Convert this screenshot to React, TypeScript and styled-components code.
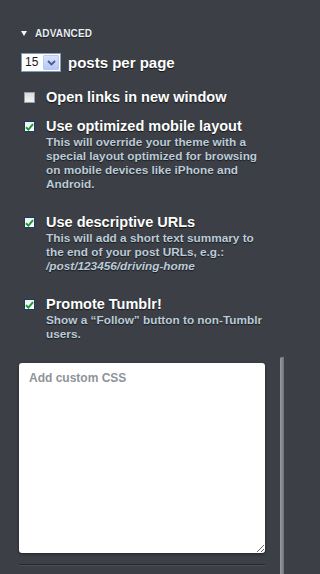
import React from 'react';
import styled, { createGlobalStyle } from 'styled-components';

type OptionProps = {
  title: string;
  checked: boolean;
  children?: React.ReactNode;
};

const GlobalStyle = createGlobalStyle`
  html, body {
    margin: 0;
    padding: 0;
    background-color: #3c4046;
  }
  body {
    font-family: "Liberation Sans", Arial, sans-serif;
    overflow: hidden;
  }
`;

const Check: React.FC<{ checked: boolean }> = ({ checked }) => (
  <Box $checked={checked}>
    {checked && (
      <svg width="9" height="8" viewBox="0 0 9 8">
        <path d="M1 4.2 L3.4 6.6 L8 1.2" fill="none" stroke="#1f9a2e" strokeWidth="2" />
      </svg>
    )}
  </Box>
);

const Option: React.FC<OptionProps> = ({ title, checked, children }) => {
  return (
    <OptionRow>
      <Check checked={checked} />
      <div>
        <OptionTitle>{title}</OptionTitle>
        {children && <OptionDesc>{children}</OptionDesc>}
      </div>
    </OptionRow>
  );
};

const App: React.FC = () => {
  return (
    <Panel>
      <GlobalStyle />
      <Header>
        <Triangle />
        <HeaderText>Advanced</HeaderText>
      </Header>
      <SelectRow>
        <FakeSelect>
          <SelectValue>15</SelectValue>
          <SelectButton>
            <svg width="9" height="6" viewBox="0 0 9 6">
              <path d="M1 1 L4.5 4.5 L8 1" fill="none" stroke="#4a5d86" strokeWidth="1.8" />
            </svg>
          </SelectButton>
        </FakeSelect>
        <SelectLabel>posts per page</SelectLabel>
      </SelectRow>
      <Options>
        <Option title="Open links in new window" checked={false} />
        <Option title="Use optimized mobile layout" checked>
          This will override your theme with a special layout optimized for browsing on mobile
          devices like iPhone and Android.
        </Option>
        <Option title="Use descriptive URLs" checked>
          This will add a short text summary to the end of your post URLs, e.g.:{' '}
          <em>/post/123456/driving-home</em>
        </Option>
        <Option title="Promote Tumblr!" checked>
          Show a “Follow” button to non&#8209;Tumblr users.
        </Option>
      </Options>
      <CssBox placeholder="Add custom CSS" />
      <Divider />
      <ScrollThumb />
    </Panel>
  );
};

const Panel = styled.div`
  position: relative;
  box-sizing: border-box;
  width: 284px;
  height: 574px;
  padding: 26px 19px 0 19px;
  background-color: #3c4046;
`;

const Header = styled.div`
  display: flex;
  align-items: center;
  gap: 8px;
  margin-left: 2px;
  height: 14px;
`;

const Triangle = styled.span`
  width: 0;
  height: 0;
  border-left: 3px solid transparent;
  border-right: 3px solid transparent;
  border-top: 5px solid #f2f5f8;
  margin-top: 1px;
`;

const HeaderText = styled.span`
  font-size: 10px;
  font-weight: bold;
  text-transform: uppercase;
  letter-spacing: 0.15px;
  color: #e8edf2;
  text-shadow: 0 1px 1px rgba(0, 0, 0, 0.6);
`;

const SelectRow = styled.div`
  display: flex;
  align-items: center;
  gap: 7px;
  margin: 13px 0 0 2px;
`;

const FakeSelect = styled.div`
  box-sizing: border-box;
  display: flex;
  align-items: stretch;
  width: 40px;
  height: 19px;
  border: 1px solid #7f9db9;
  background: #fff;
`;

const SelectValue = styled.span`
  flex: 1;
  padding-left: 3px;
  font-size: 12px;
  line-height: 17px;
  color: #1a1a1a;
`;

const SelectButton = styled.span`
  box-sizing: border-box;
  width: 16px;
  margin: 1px;
  display: flex;
  align-items: center;
  justify-content: center;
  border: 1px solid #b9c9ef;
  border-radius: 1px;
  background: linear-gradient(#d8e4fd, #b5c8f7);
`;

const SelectLabel = styled.span`
  font-size: 15px;
  font-weight: bold;
  color: #fff;
  text-shadow: 0 1px 1px rgba(0, 0, 0, 0.7);
`;

const Options = styled.div`
  margin-top: 16px;
`;

const OptionRow = styled.div`
  display: grid;
  grid-template-columns: 27px 1fr;
  margin-bottom: 11px;
`;

const Box = styled.span<{ $checked: boolean }>`
  box-sizing: border-box;
  display: flex;
  align-items: center;
  justify-content: center;
  width: 11px;
  height: 11px;
  margin: 4px 0 0 5px;
  border: 1px solid ${(p) => (p.$checked ? '#1d3a5f' : '#9a9ea4')};
  background: ${(p) => (p.$checked ? 'linear-gradient(#eef0f2, #ffffff)' : 'linear-gradient(#d9dbdd, #f4f4f4)')};
`;

const OptionTitle = styled.div`
  font-size: 14.5px;
  font-weight: bold;
  line-height: 18px;
  color: #fff;
  text-shadow: 0 1px 1px rgba(0, 0, 0, 0.7);
`;

const OptionDesc = styled.div`
  margin-right: -6px;
  font-size: 11.8px;
  font-weight: bold;
  line-height: 14px;
  color: #bccbd9;
  padding-bottom: 11px;
  text-shadow: 0 1px 1px rgba(0, 0, 0, 0.6);

  em {
    font-style: italic;
  }
`;

const CssBox = styled.textarea`
  display: block;
  box-sizing: border-box;
  width: 246px;
  height: 190px;
  padding: 8px 10px;
  border: none;
  border-radius: 3px;
  background: #fff;
  box-shadow: 0 1px 3px rgba(0, 0, 0, 0.5);
  font-family: "Liberation Sans", Arial, sans-serif;
  font-size: 12px;
  font-weight: bold;
  outline: none;

  &::placeholder {
    color: #8e939b;
  }
`;

const Divider = styled.div`
  width: 246px;
  height: 1px;
  margin-top: 11px;
  background: #26292d;
  border-bottom: 1px solid #4a4e54;
`;

const ScrollThumb = styled.div`
  position: absolute;
  left: 280px;
  top: 357px;
  bottom: 0;
  width: 4px;
  border-radius: 2px 0 0 0;
  background: linear-gradient(to right, #9a9ca0, #6e7176);
`;

export default App;
